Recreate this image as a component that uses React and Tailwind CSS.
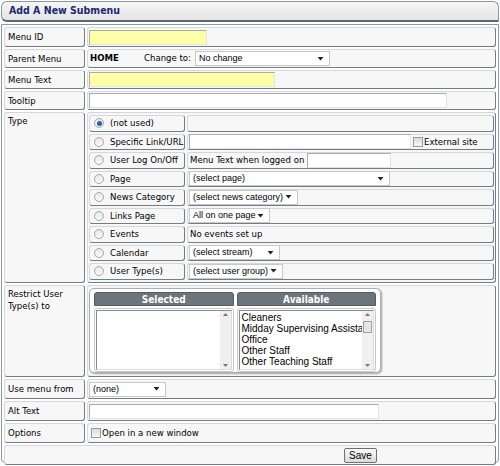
import React from "react";

const cell = "bg-[#f7f7f7] border border-[#d4d8da] border-r-[#707e85] border-b-[#707e85] rounded-[3px]";
const V = { fontFamily: '"DejaVu Sans Condensed", "DejaVu Sans", Verdana, sans-serif' };
const A = { fontFamily: '"Liberation Sans", Arial, sans-serif' };

function Arrow() {
  return (
    <svg width="7" height="4" viewBox="0 0 7 4" className="shrink-0">
      <path d="M0.5 0h6L3.5 3.5z" fill="#222" />
    </svg>
  );
}

function Select({ w, children }) {
  return (
    <div
      className="h-[15px] bg-white border border-[#c8c8c8] flex items-center justify-between pl-[3px] pr-[5px] text-[9px] text-black leading-none"
      style={{ ...A, width: w }}
    >
      <span className="whitespace-nowrap">{children}</span>
      <Arrow />
    </div>
  );
}

function Input({ w, yellow }) {
  return (
    <div
      className={`h-[15px] border border-[#aaaaaa] border-r-[#e4e4e4] border-b-[#e4e4e4] ${yellow ? "bg-[#ffffa8]" : "bg-white"}`}
      style={{ width: w }}
    />
  );
}

function Radio({ on }) {
  return (
    <span className="w-[10px] h-[10px] rounded-full border border-[#a8a8a8] bg-gradient-to-b from-[#e8e8e8] to-[#fafafa] flex items-center justify-center shrink-0">
      {on && <span className="w-[5px] h-[5px] rounded-full bg-[#2a5fa8]" />}
    </span>
  );
}

function Check() {
  return <span className="w-[10px] h-[10px] border border-[#9a9a9a] bg-gradient-to-b from-[#dcdcdc] to-[#f6f6f6] shrink-0" />;
}

function Row({ label, h, children }) {
  return (
    <>
      <div className={`${cell} px-[3px] flex items-center text-[9.5px] text-black whitespace-nowrap`} style={{ ...V, height: h }}>
        <span className="leading-[12px]">{label}</span>
      </div>
      <div className={`${cell} flex items-center px-[1px] text-[9.5px]`} style={{ height: h }}>
        {children}
      </div>
    </>
  );
}

function TypeRow({ label, on, children }) {
  return (
    <>
      <div className={`${cell} h-[16.5px] flex items-center gap-[6px] pl-[4px] text-[9.5px] whitespace-nowrap`} style={V}>
        <Radio on={on} />
        <span>{label}</span>
      </div>
      <div className={`${cell} h-[16.5px] flex items-center pl-[1px] text-[9.5px] whitespace-nowrap`} style={V}>
        {children}
      </div>
    </>
  );
}

function ListBox({ items }) {
  return (
    <div className="h-[60px] bg-white border border-[#8a8a8a] border-r-[#dcdcdc] border-b-[#dcdcdc] flex">
      <div className="flex-1 pl-[2px] pt-[1px] text-[10px] leading-[11px] overflow-hidden whitespace-nowrap" style={A}>
        {items.map((t) => (
          <div key={t}>{t}</div>
        ))}
      </div>
      <div className="w-[11px] bg-[#f0f0f0] flex flex-col items-center justify-between py-[2px] relative">
        <svg width="5" height="3" viewBox="0 0 5 3"><path d="M0 3h5L2.5 0z" fill="#777" /></svg>
        {items.length > 0 && (
          <div className="absolute top-[10px] left-[1px] w-[9px] h-[12px] bg-[#e6e6e6] border border-[#a0a0a0]" />
        )}
        <svg width="5" height="3" viewBox="0 0 5 3"><path d="M0 0h5L2.5 3z" fill="#777" /></svg>
      </div>
    </div>
  );
}

export default function App() {
  return (
    <div className="w-[500px] h-[466px] bg-white p-[1px] text-black" style={V}>
      <div className="h-[21px] rounded-t-[6px] rounded-bl-[6px] border border-[#8a9aa2] border-b-2 border-b-[#5a6a72] bg-gradient-to-b from-[#f6f6f6] to-[#e4e4e4] flex items-center pl-[7px]">
        <span className="text-[10.5px] font-bold text-[#1c2a70]">Add A New Submenu</span>
      </div>
      <div className="mt-[2px] h-[439px] border border-[#8a9aa2] rounded-b-[4px] bg-white p-[2px]">
        <div className="grid grid-cols-[81px_1fr] gap-[2px]">
          <Row label="Menu ID" h={20}>
            <Input w={118} yellow />
          </Row>
          <Row label="Parent Menu" h={19}>
            <span className="font-bold ml-[1px] w-[54px]">HOME</span>
            <span className="mr-[4px]">Change to:</span>
            <Select w={135}>No change</Select>
          </Row>
          <Row label="Menu Text" h={19}>
            <Input w={186} yellow />
          </Row>
          <Row label="Tooltip" h={19}>
            <Input w={358} />
          </Row>
          <div className={`${cell} h-[171px] px-[3px] pt-[1px] text-[9.5px]`}>Type</div>
          <div className={`${cell} h-[171px] p-[1px] pt-[2px]`}>
            <div className="grid grid-cols-[96px_1fr] gap-x-[2px] gap-y-[2px]">
              <TypeRow label="(not used)" on>
                <span />
              </TypeRow>
              <TypeRow label="Specific Link/URL">
                <Input w={222} />
                <span className="ml-[2px] flex items-center gap-[1px]">
                  <Check />
                  <span>External site</span>
                </span>
              </TypeRow>
              <TypeRow label="User Log On/Off">
                <span className="ml-[1px] mr-[3px]">Menu Text when logged on</span>
                <Input w={84} />
              </TypeRow>
              <TypeRow label="Page">
                <Select w={201}>(select page)</Select>
              </TypeRow>
              <TypeRow label="News Category">
                <Select w={109}>(select news category)</Select>
              </TypeRow>
              <TypeRow label="Links Page">
                <Select w={81}>All on one page</Select>
              </TypeRow>
              <TypeRow label="Events">
                <span className="ml-[1px]">No events set up</span>
              </TypeRow>
              <TypeRow label="Calendar">
                <Select w={91}>(select stream)</Select>
              </TypeRow>
              <TypeRow label="User Type(s)">
                <Select w={94}>(select user group)</Select>
              </TypeRow>
            </div>
          </div>
          <div className={`${cell} h-[92px] px-[3px] pt-[2px] text-[9.5px] leading-[12px]`}>
            Restrict User
            <br />
            Type(s) to
          </div>
          <div className={`${cell} h-[92px] pl-[1px] pt-[2px]`}>
            <div className="w-[292px] h-[85px] bg-white border border-[#a8b0b4] rounded-[5px] shadow-[1px_1px_2px_rgba(0,0,0,0.35)] grid grid-cols-2 gap-[3px] px-[4px] pt-[3px]">
              {[
                ["Selected", []],
                ["Available", ["Cleaners", "Midday Supervising Assistants", "Office", "Other Staff", "Other Teaching Staff"]],
              ].map(([h, items]) => (
                <div key={h} className="flex flex-col">
                  <div className="h-[14px] rounded-t-[3px] bg-[#6c757b] border border-[#555d62] text-white font-bold text-[10px] flex items-center justify-center">
                    {h}
                  </div>
                  <div className="mt-[2px] border border-[#c8c8c8] rounded-[3px] p-[1px]">
                    <ListBox items={items} />
                  </div>
                </div>
              ))}
            </div>
          </div>
          <Row label="Use menu from" h={20}>
            <Select w={77}>(none)</Select>
          </Row>
          <Row label="Alt Text" h={20}>
            <Input w={290} />
          </Row>
          <Row label="Options" h={20}>
            <span className="ml-[2px] flex items-center gap-[1px]">
              <Check />
              <span>Open in a new window</span>
            </span>
          </Row>
          <div className={`col-span-2 ${cell} h-[20px] flex items-center pl-[339px]`}>
            <div className="h-[15px] w-[33px] rounded-[2px] border border-[#707070] bg-gradient-to-b from-[#fafafa] to-[#dcdcdc] text-[10px] flex items-center justify-center" style={A}>
              Save
            </div>
          </div>
        </div>
      </div>
    </div>
  );
}
